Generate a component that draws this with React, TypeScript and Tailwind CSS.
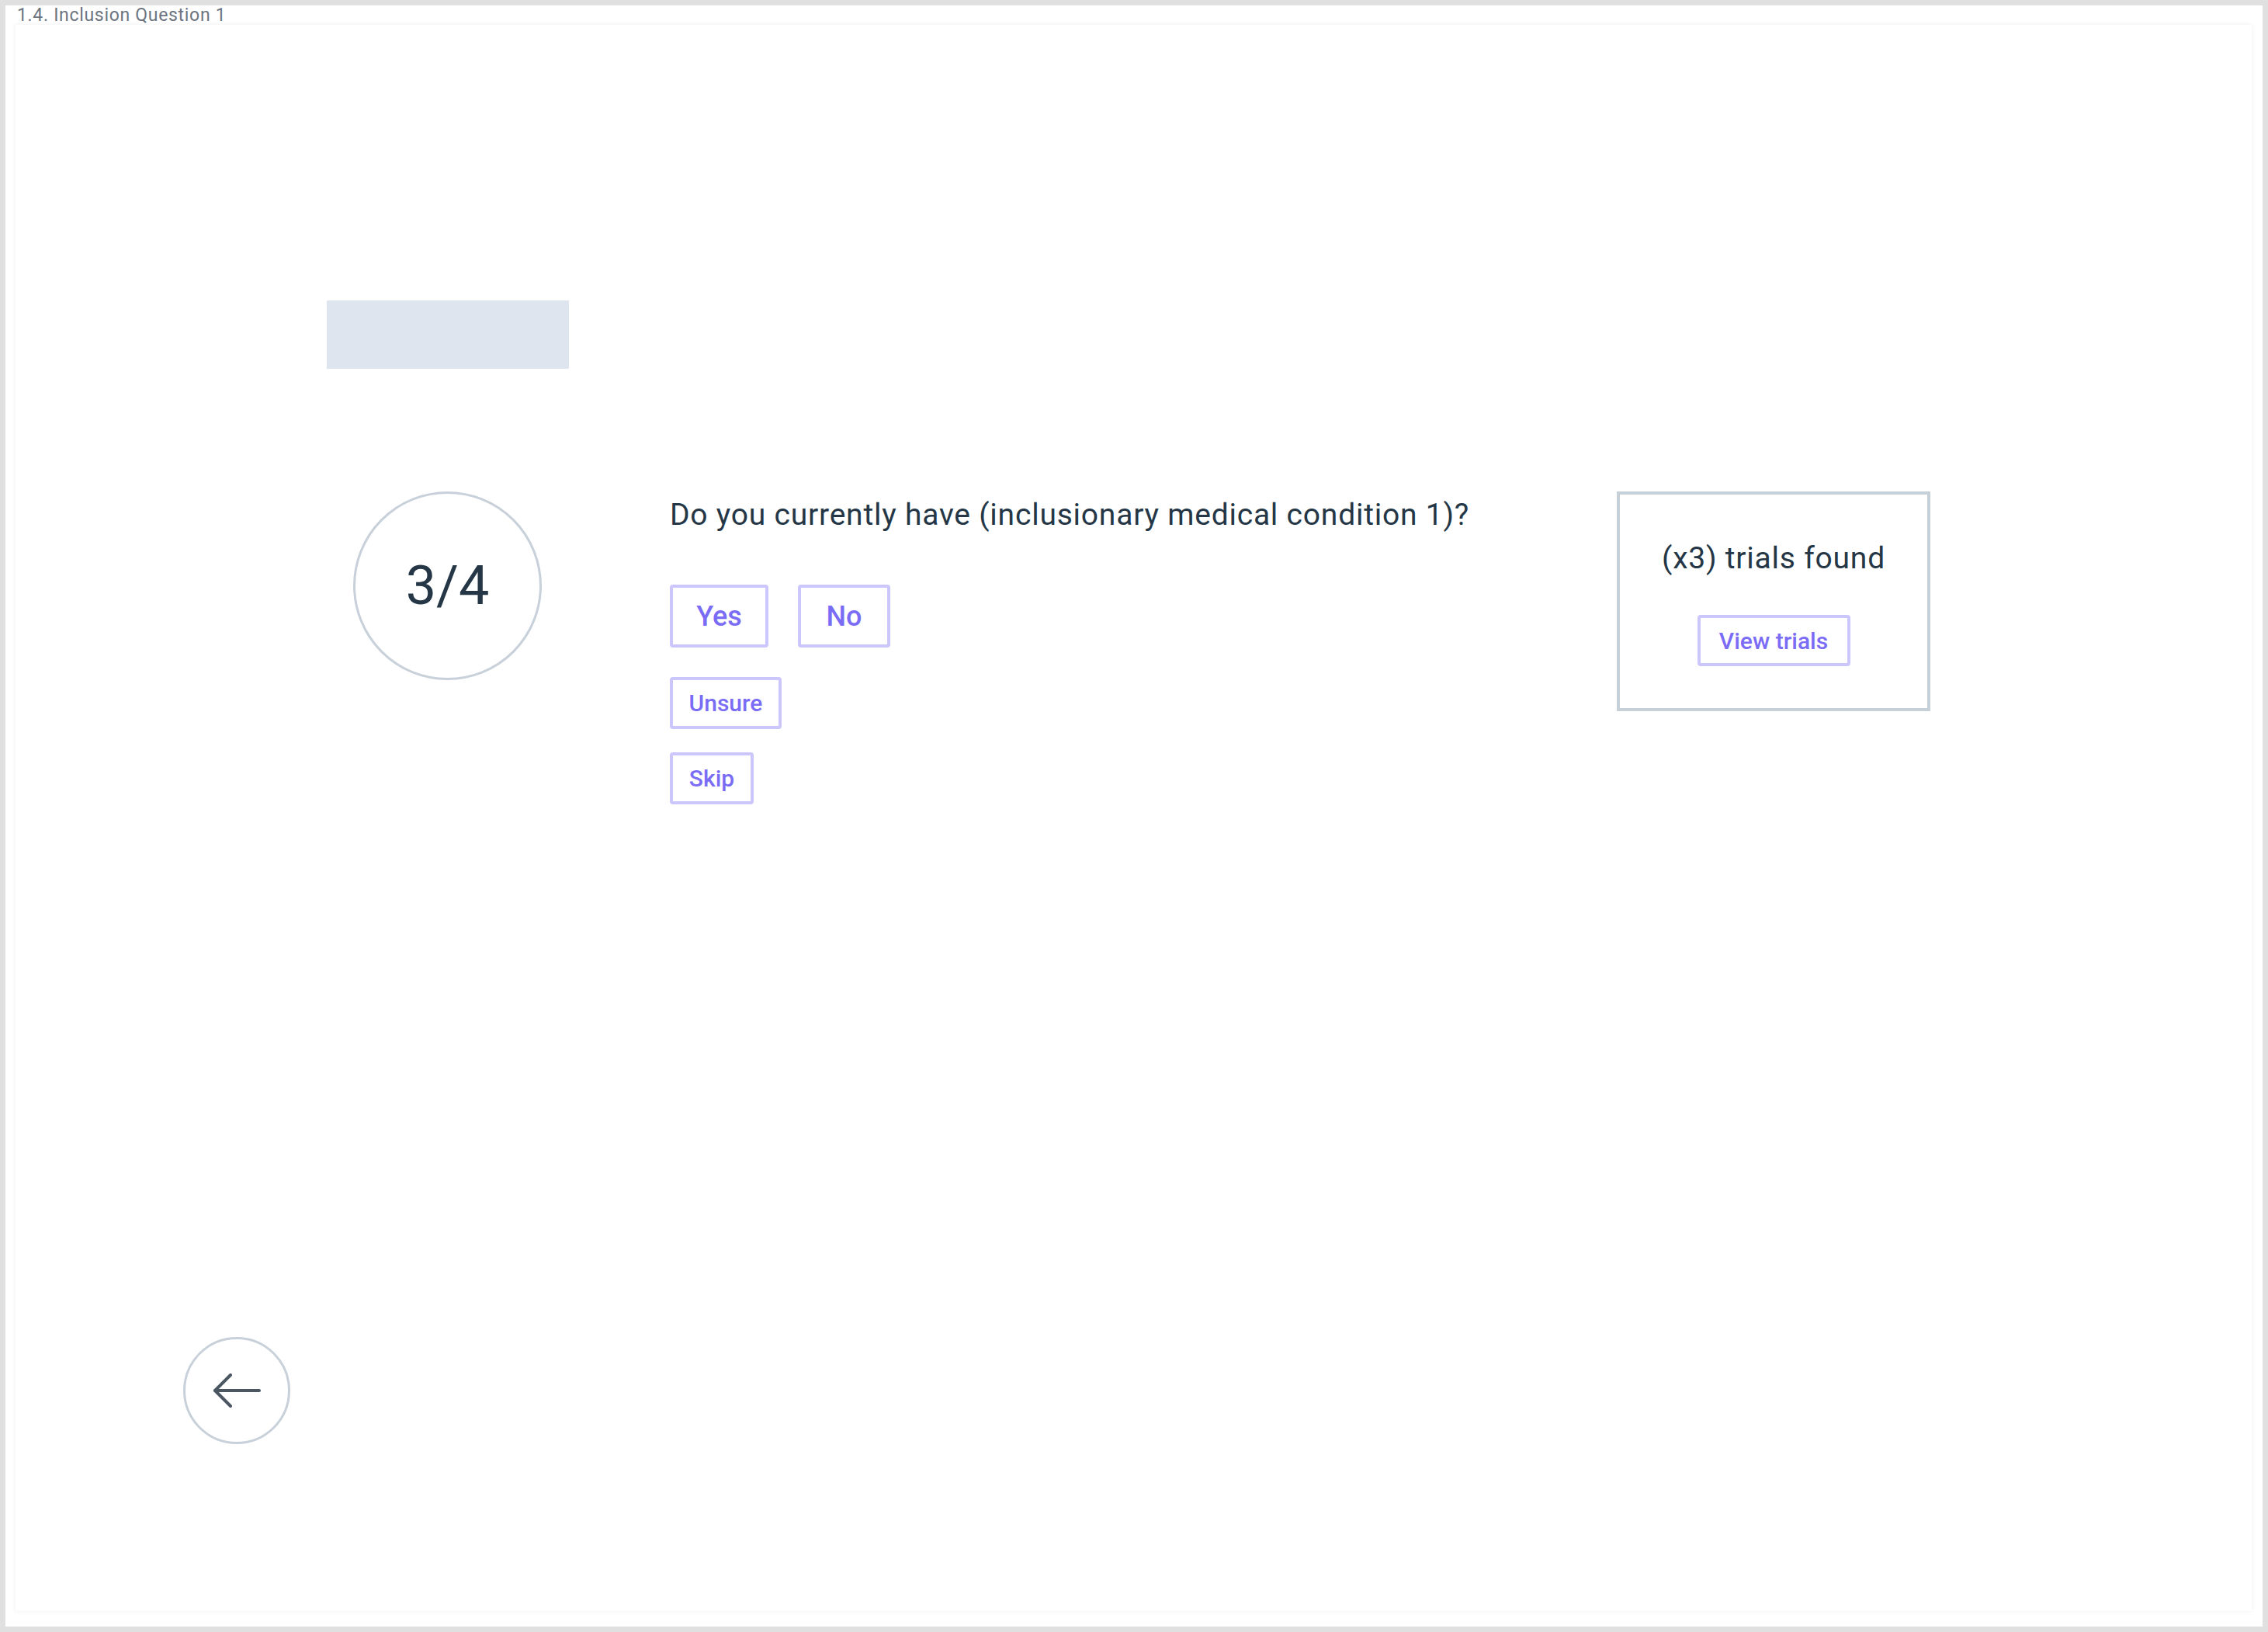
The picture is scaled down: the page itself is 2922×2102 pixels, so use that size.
export default function App() {
  return (
    <div className="min-h-screen w-full bg-[#e0e0e0] p-[7px] font-[Roboto,'Liberation_Sans',sans-serif]">
      <div className="h-[2088px] w-[2908px] bg-white">
        {/* frame label */}
        <p className="pl-[15px] text-[23px] leading-[25px] tracking-[0.03em] text-[#6c757f]">
          1.4. Inclusion Question 1
        </p>

        {/* artboard */}
        <div className="ml-[13px] flex h-[2043px] w-[2881px] flex-col bg-white shadow-[0_0_6px_rgba(0,0,0,0.07)]">
          <div className="ml-[401px] mt-[355px] h-[88px] w-[312px] bg-[#dfe5ee]" />

          <div className="mt-[158px] flex items-start pl-[435px]">
            <div className="flex h-[243px] w-[243px] items-center justify-center rounded-full border-[3px] border-[#c8d1da] text-[70px] text-[#253746]">
              3/4
            </div>

            <div className="ml-[165px] flex w-[1220px] flex-col">
              <p className="mt-[7px] text-[39px] leading-[47px] tracking-[0.02em] text-[#253746]">
                Do you currently have (inclusionary medical condition 1)?
              </p>
              <div className="mt-[66px] flex gap-[38px]">
                <button className="flex h-[81px] w-[127px] items-center justify-center rounded-[4px] border-4 border-[#cbc7fc] text-[36px] font-medium text-[#7b6cf5]">
                  Yes
                </button>
                <button className="flex h-[81px] w-[119px] items-center justify-center rounded-[4px] border-4 border-[#cbc7fc] text-[36px] font-medium text-[#7b6cf5]">
                  No
                </button>
              </div>
              <button className="mt-[38px] flex h-[67px] w-[144px] items-center justify-center rounded-[4px] border-4 border-[#cbc7fc] text-[30px] font-medium text-[#7b6cf5]">
                Unsure
              </button>
              <button className="mt-[30px] flex h-[67px] w-[108px] items-center justify-center rounded-[4px] border-4 border-[#cbc7fc] text-[30px] font-medium text-[#7b6cf5]">
                Skip
              </button>
            </div>

            <div className="flex h-[283px] w-[404px] flex-col items-center border-4 border-[#c5d0d9] pt-[59px]">
              <p className="text-[39px] leading-[47px] tracking-[0.02em] text-[#253746]">(x3) trials found</p>
              <button className="mt-[49px] flex h-[66px] w-[197px] items-center justify-center rounded-[4px] border-4 border-[#cbc7fc] text-[30px] font-medium text-[#7b6cf5]">
                View trials
              </button>
            </div>
          </div>

          <button className="mb-[215px] ml-[216px] mt-auto flex h-[138px] w-[138px] items-center justify-center rounded-full border-[3px] border-[#c8d1da]">
            <svg width="62" height="44" viewBox="0 0 62 44" fill="none" stroke="#4b5663" strokeWidth="4" strokeLinecap="round" strokeLinejoin="round">
              <path d="M3 22H60" />
              <path d="M23 2L3 22L23 42" />
            </svg>
          </button>
        </div>
      </div>
    </div>
  );
}
